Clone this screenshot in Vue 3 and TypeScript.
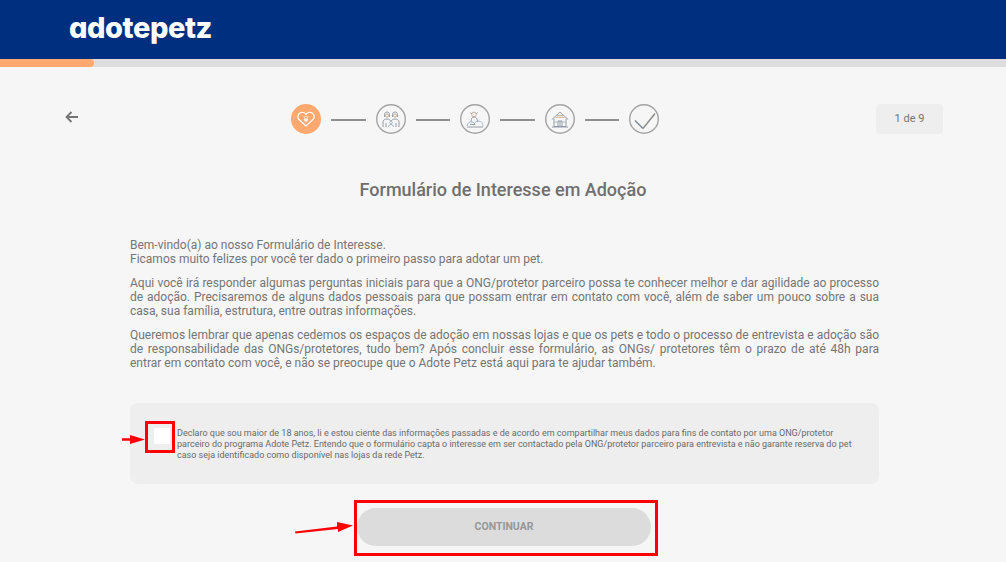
<script setup lang="ts">
const paragraphs: string[][] = [
  ["Bem-vindo(a) ao nosso Formulário de Interesse.", "Ficamos muito felizes por você ter dado o primeiro passo para adotar um pet."],
  ["Aqui você irá responder algumas perguntas iniciais para que a ONG/protetor parceiro possa te conhecer melhor e dar agilidade ao processo", "de adoção. Precisaremos de alguns dados pessoais para que possam entrar em contato com você, além de saber um pouco sobre a sua", "casa, sua família, estrutura, entre outras informações."],
  ["Queremos lembrar que apenas cedemos os espaços de adoção em nossas lojas e que os pets e todo o processo de entrevista e adoção são", "de responsabilidade das ONGs/protetores, tudo bem? Após concluir esse formulário, as ONGs/ protetores têm o prazo de até 48h para", "entrar em contato com você, e não se preocupe que o Adote Petz está aqui para te ajudar também."],
];
</script>

<template>
  <div class="page">
    <header class="topbar"><span class="logo">adotepetz</span></header>
    <div class="progress"><div class="progress-fill"></div></div>

    <div class="steps-row">
      <svg class="back" width="14" height="12" viewBox="0 0 14 12" fill="none" stroke="#757575" stroke-width="1.8">
        <path d="M13 6H2M6.5 1 1.5 6l5 5" />
      </svg>
      <div class="steps">
        <div class="step active">
          <svg width="18" height="16" viewBox="0 0 18 16" fill="none" stroke="#fff" stroke-width="1.2">
            <path d="M9 15 2 8.500C.2 6.600.6 3.200 3.200 1.800 5.200.8 7.800 1.400 9 3.400 10.200 1.400 12.800.8 14.800 1.800c2.600 1.400 3 4.800 1.200 6.700Z" />
            <path d="M7 7.500h4l-.5 3h-3Z" fill="#fff" stroke="none" />
            <path d="M7.500 6.600 7 5.400M9 6.200V5M10.500 6.600 11 5.400" stroke-width=".9" />
          </svg>
        </div>
        <i class="line"></i>
        <div class="step">
          <svg width="18" height="17" viewBox="0 0 18 17" fill="none" stroke="#8b93a0" stroke-width=".9">
            <path d="M2.500 6V3.500C2.500 1.800 3.800 1 5 1s2.500.8 2.500 2.500V6M10.500 6V3.500C10.500 1.800 11.800 1 13 1s2.500.8 2.500 2.500V6" />
            <circle cx="5" cy="4.500" r="1.700" stroke="#c9a88c" />
            <circle cx="13" cy="4.500" r="1.700" stroke="#c9a88c" />
            <path d="M1 16v-5c0-2 2-3 4-3s3 1 4 2c1-1 2-2 4-2s4 1 4 3v5M4 16v-4M14 16v-4" />
            <circle cx="9" cy="11.500" r="1.300" stroke="#9cb4cc" />
            <path d="M6.500 16c0-1.500 1-2.500 2.500-2.500s2.500 1 2.500 2.500" stroke="#9cb4cc" />
          </svg>
        </div>
        <i class="line"></i>
        <div class="step">
          <svg width="18" height="17" viewBox="0 0 18 17" fill="none" stroke="#8b93a0" stroke-width=".9">
            <circle cx="8" cy="3.500" r="2.300" stroke="#c9a88c" />
            <path d="M4.500 1.500 5.800 3M11.500 1.500 10.200 3M5 11c0-3 1-5 3-5s3.500 2 3.500 5" />
            <path d="M1 15c.5-3 2.500-4.500 5-4 2 .4 3 1.500 3 3M8 13c1-2.500 4-3.500 6.500-2.500 2 .8 2.500 2.500 2.500 4.500" stroke="#9cb4cc" />
            <path d="M1 16h16M4 13.500h5" />
          </svg>
        </div>
        <i class="line"></i>
        <div class="step">
          <svg width="18" height="17" viewBox="0 0 18 17" fill="none" stroke="#8b93a0" stroke-width=".9">
            <path d="M.8 8.500 9 1l8.200 7.500" />
            <path d="M6 4.500h6M4.500 6.300h9" stroke="#c9a88c" />
            <path d="M3 7.500V15.500h12V7.500M7 15.500V10h4v5.500M9 10v5.500M1 16h16" />
            <path d="M3.500 11h3M11.500 11h3" stroke="#9cb4cc" />
          </svg>
        </div>
        <i class="line"></i>
        <div class="step">
          <svg width="24" height="19" viewBox="0 0 24 19" fill="none" stroke-width="1.500">
            <path d="M3 10.500 11 18.500" stroke="#7f8a99" />
            <path d="M11 18.500 23 3.500" stroke="#8d8f8a" />
          </svg>
        </div>
      </div>
      <div class="counter">1 de 9</div>
    </div>

    <h1 class="title">Formulário de Interesse em Adoção</h1>

    <div class="intro">
      <p v-for="(lines, i) in paragraphs" :key="i">
        <span v-for="line in lines" :key="line" class="line-text">{{ line }}</span>
      </p>
    </div>

    <div class="consent">
      <div class="check-frame">
        <span class="checkbox"></span>
        <svg class="arrow-left" width="23" height="9" viewBox="0 0 23 9">
          <path d="M0 3.200 8 3.200 8 0 23 4.500 8 9 8 5.800 0 5.800Z" fill="#f00" />
        </svg>
      </div>
      <p class="consent-text">
        <span class="line-text">Declaro que sou maior de 18 anos, li e estou ciente das informações passadas e de acordo em compartilhar meus dados para fins de contato por uma ONG/protetor</span>
        <span class="line-text">parceiro do programa Adote Petz. Entendo que o formulário capta o interesse em ser contactado pela ONG/protetor parceiro para entrevista e não garante reserva do pet</span>
        <span class="line-text">caso seja identificado como disponível nas lojas da rede Petz.</span>
      </p>
    </div>

    <div class="action">
      <svg class="arrow-btn" width="58" height="16" viewBox="0 0 58 16">
        <path d="M0 11.500 42 6.500 42 2 58 5.500 43 12 43 9 .5 13.500Z" fill="#f00" />
      </svg>
      <div class="btn-frame"><button class="btn" type="button">CONTINUAR</button></div>
    </div>
  </div>
</template>

<style scoped>
.page {
  width: 1006px;
  height: 562px;
  overflow: hidden;
  background: #f6f6f6;
  font-family: Roboto, "Liberation Sans", sans-serif;
  color: #757575;
}

.topbar {
  height: 59px;
  background: #002f7f;
  padding-left: 69px;
  box-sizing: border-box;
}

.logo {
  display: block;
  font-family: Inter, "Open Sans", sans-serif;
  font-feature-settings: "cv11";
  font-size: 29px;
  font-weight: 800;
  line-height: 56px;
  letter-spacing: -0.45px;
  color: #fff;
}

.progress {
  height: 8px;
  background: #dedede;
}

.progress-fill {
  width: 94px;
  height: 100%;
  background: #ffa86f;
  border-radius: 0 4px 4px 0;
}

.steps-row {
  position: relative;
  display: flex;
  justify-content: center;
  align-items: center;
  height: 68px;
  margin-top: 18px;
}

.back {
  position: absolute;
  left: 65px;
  top: 26px;
}

.steps {
  display: flex;
  align-items: center;
  gap: 10px;
  margin-left: -56px;
}

.step {
  width: 30px;
  height: 30px;
  box-sizing: content-box;
  border-radius: 50%;
  display: flex;
  align-items: center;
  justify-content: center;
  box-shadow: inset 0 0 0 1.4px #a3a3a3;
}

.step.active {
  background: #ffa86f;
  box-shadow: none;
}

.line {
  width: 34.500px;
  height: 2px;
  margin-top: 2px;
  background: #8f8f8f;
}

.counter {
  position: absolute;
  left: 876px;
  top: 19px;
  width: 67px;
  height: 30px;
  border-radius: 4px;
  background: #eeeeee;
  font-size: 11px;
  line-height: 30px;
  text-align: center;
}

.title {
  margin: 25px 0 0;
  font-size: 18px;
  font-weight: 500;
  line-height: 24px;
  text-align: center;
  color: #6f6f6f;
}

.intro {
  margin: 36px 0 0 130px;
  width: 749px;
  font-size: 12px;
  line-height: 14px;
}

.intro p {
  margin: 0 0 10px;
}

.intro p:last-child {
  margin-bottom: 11px;
}

.line-text {
  display: block;
}

.intro p:not(:first-child) .line-text:not(:last-child) {
  text-align: justify;
  text-align-last: justify;
}

.consent {
  display: flex;
  gap: 2px;
  box-sizing: border-box;
  width: 749px;
  height: 81px;
  margin: 33px 0 0 130px;
  padding: 18px 0 0 15px;
  background: #eeeeee;
  border-radius: 8px;
}

.check-frame {
  position: relative;
  flex: none;
  box-sizing: border-box;
  width: 30px;
  height: 32px;
  padding: 4px 0 0 6px;
  border: 3px solid #f00;
}

.checkbox {
  display: block;
  width: 16px;
  height: 16px;
  background: #fff;
}

.arrow-left {
  position: absolute;
  left: -26px;
  top: 11px;
}

.consent-text {
  margin: 7px 0 0;
  font-size: 9px;
  line-height: 11px;
  color: #6a6a6a;
  white-space: nowrap;
}

.action {
  position: relative;
  display: flex;
  justify-content: center;
  margin-top: 16px;
}

.arrow-btn {
  position: absolute;
  left: 295px;
  top: 20px;
}

.btn-frame {
  box-sizing: border-box;
  width: 304px;
  height: 56px;
  margin-left: 6px;
  padding-top: 5px;
  border: 3px solid #f00;
}

.btn {
  display: block;
  width: 294px;
  height: 38px;
  padding: 0 0 2px;
  border: none;
  border-radius: 19px;
  background: #dcdcdc;
  color: #979797;
  font-family: inherit;
  font-size: 10.500px;
  font-weight: 700;
}
</style>
